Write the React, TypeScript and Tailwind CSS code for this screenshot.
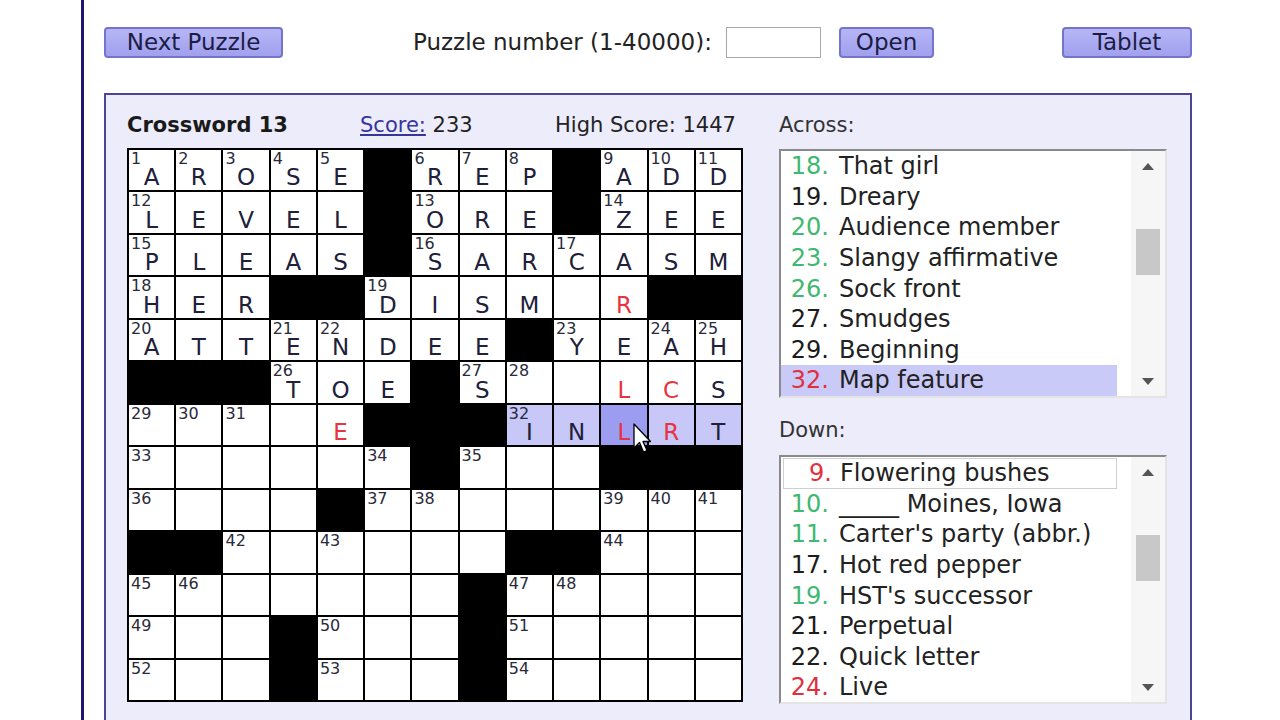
import React from 'react'

const GRID = [
	'AROSE#REP#ADD',
	'LEVEL#ORE#ZEE',
	'PLEAS#SARCASM',
	'HER##DISM.R##',
	'ATTENDEE#YEAH',
	'###TOE#S..LCS',
	'....E###INLRT',
	'......#...###',
	'....#........',
	'##......##...',
	'.......#.....',
	'...#...#.....',
	'...#...#.....',
]

const RED = new Set(['3,10', '5,10', '5,11', '6,4', '6,10', '6,11'])

function isOpen(r: number, c: number) {
	return r >= 0 && r < 13 && c >= 0 && c < 13 && GRID[r][c] !== '#'
}

function buildNumbers() {
	const nums: Record<string, number> = {}
	let n = 1
	for (let r = 0; r < 13; r++) {
		for (let c = 0; c < 13; c++) {
			if (!isOpen(r, c)) continue
			const across = !isOpen(r, c - 1) && isOpen(r, c + 1)
			const down = !isOpen(r - 1, c) && isOpen(r + 1, c)
			if (across || down) nums[`${r},${c}`] = n++
		}
	}
	return nums
}

const NUMS = buildNumbers()

type Clue = { n: number; text: string; tone: 'green' | 'black' | 'red' }

const ACROSS: Clue[] = [
	{ n: 18, text: 'That girl', tone: 'green' },
	{ n: 19, text: 'Dreary', tone: 'black' },
	{ n: 20, text: 'Audience member', tone: 'green' },
	{ n: 23, text: 'Slangy affirmative', tone: 'green' },
	{ n: 26, text: 'Sock front', tone: 'green' },
	{ n: 27, text: 'Smudges', tone: 'black' },
	{ n: 29, text: 'Beginning', tone: 'black' },
	{ n: 32, text: 'Map feature', tone: 'red' },
]

const DOWN: Clue[] = [
	{ n: 9, text: 'Flowering bushes', tone: 'red' },
	{ n: 10, text: '_____ Moines, Iowa', tone: 'green' },
	{ n: 11, text: "Carter's party (abbr.)", tone: 'green' },
	{ n: 17, text: 'Hot red pepper', tone: 'black' },
	{ n: 19, text: "HST's successor", tone: 'green' },
	{ n: 21, text: 'Perpetual', tone: 'black' },
	{ n: 22, text: 'Quick letter', tone: 'black' },
	{ n: 24, text: 'Live', tone: 'red' },
]

const toneClass = {
	green: 'text-[#3fb872]',
	black: 'text-[#1c1c1c]',
	red: 'text-[#e0303c]',
}

function Btn({ label, w }: { label: string; w: string }) {
	return (
		<button
			type="button"
			className={`${w} h-[31px] rounded-[4px] border-2 border-[#7474cc] bg-gradient-to-b from-[#b6b6f6] to-[#a0a0ee] text-[23px] leading-none text-[#1c1c44]`}
		>
			{label}
		</button>
	)
}

function Cell({ r, c }: { r: number; c: number }) {
	const ch = GRID[r][c]
	if (ch === '#') return <div className="bg-black" />
	const num = NUMS[`${r},${c}`]
	const current = r === 6 && c === 10
	const word = r === 6 && c >= 8
	const bg = current ? 'bg-[#9c9cf0]' : word ? 'bg-[#c7c7f8]' : 'bg-white'
	const color = RED.has(`${r},${c}`) ? 'text-[#e8343e]' : 'text-[#20203a]'
	return (
		<div className={`relative flex items-end justify-center ${bg}`}>
			{num && (
				<span className="absolute left-[2px] top-[1px] text-[16px] leading-none text-[#2a2a3a]">{num}</span>
			)}
			{ch !== '.' && <span className={`text-[23px] leading-[26px] ${color}`}>{ch}</span>}
		</div>
	)
}

function ClueBox({ items, selected }: { items: Clue[]; selected: 'fill' | 'box' }) {
	return (
		<div className="flex h-[249px] w-[388px] border-2 border-t-[#8a8a8a] border-l-[#8a8a8a] border-r-[#e4e4e4] border-b-[#e4e4e4] bg-white">
			<div className="w-[336px]">
				{items.map((it, i) => {
					const last = i === items.length - 1
					const fill = selected === 'fill' && last
					const box = selected === 'box' && i === 0
					return (
						<div
							key={it.n}
							className={`flex h-[30.6px] items-center text-[24px] leading-none ${fill ? 'bg-[#cacaf8]' : ''} ${
								box ? 'ml-[2px] mt-[1px] h-[29px] border border-[#cfcfcf]' : ''
							}`}
						>
							<span className={`w-[48px] text-right ${toneClass[it.tone]}`}>{it.n}.</span>
							<span className={`${box ? 'ml-[8px]' : 'ml-[10px]'} text-[#222]`}>{it.text}</span>
						</div>
					)
				})}
			</div>
			<div className="ml-auto flex w-[34px] flex-col items-center bg-[#f6f6f6]">
				<div className="flex h-[30px] items-center justify-center">
					<svg width="12" height="7" viewBox="0 0 12 7">
						<path d="M6 0 L12 7 L0 7 Z" fill="#555" />
					</svg>
				</div>
				<div className="mt-[48px] h-[46px] w-[24px] bg-[#c8c8c8]" />
				<div className="mt-auto flex h-[30px] items-center justify-center">
					<svg width="12" height="7" viewBox="0 0 12 7">
						<path d="M0 0 L12 0 L6 7 Z" fill="#555" />
					</svg>
				</div>
			</div>
		</div>
	)
}

export default function App() {
	return (
		<div className="flex h-[720px] w-[1280px] overflow-hidden bg-white font-['DejaVu_Sans',sans-serif] text-[#222]">
			<div className="w-[81px] shrink-0" />
			<div className="w-[3px] shrink-0 bg-[#1e1672]" />
			<div className="flex w-[1108px] flex-col pl-[20px]">
				{/* top controls */}
				<div className="mt-[27px] flex h-[31px] items-center">
					<Btn label="Next Puzzle" w="w-[179px]" />
					<span className="ml-[130px] w-[313px] text-[23px] leading-none">Puzzle number (1-40000):</span>
					<input className="h-[31px] w-[95px] border border-[#a8a8a8] bg-white" />
					<div className="ml-[18px]">
						<Btn label="Open" w="w-[95px]" />
					</div>
					<div className="ml-auto">
						<Btn label="Tablet" w="w-[130px]" />
					</div>
				</div>

				{/* main panel */}
				<div className="mt-[35px] flex h-[660px] w-[1088px] shrink-0 border-2 border-[#4c4598] bg-[#ececfb] pl-[21px] pt-[18px]">
					<div className="flex flex-col">
						<div className="flex h-[24px] items-center text-[21px] leading-none">
							<span className="w-[233px] font-bold text-[#1a1a1a]">Crossword 13</span>
							<span className="w-[195px]">
								<span className="text-[#3535a0] underline">Score:</span> 233
							</span>
							<span>High Score: 1447</span>
						</div>
						<div className="relative mt-[11px]">
							<div className="grid h-[554px] w-[616px] grid-cols-13 grid-rows-13 gap-[2px] border-2 border-black bg-black">
								{GRID.map((row, r) => row.split('').map((_, c) => <Cell key={`${r}-${c}`} r={r} c={c} />))}
							</div>
							<svg
								className="absolute left-[506px] top-[275px]"
								width="20"
								height="32"
								viewBox="0 0 20 32"
							>
								<path d="M1 1 L1 25 L6.5 19.5 L10.5 29 L14 27.5 L10 18.5 L17.5 18.5 Z" fill="#fff" stroke="#000" strokeWidth="1.3" strokeLinejoin="round" />
							</svg>
						</div>
					</div>

					<div className="ml-[36px] flex flex-col text-[21px] leading-none">
						<div className="flex h-[24px] items-center text-[#333]">Across:</div>
						<div className="mt-[12px]">
							<ClueBox items={ACROSS} selected="fill" />
						</div>
						<div className="mt-[20px] flex h-[24px] items-center text-[#333]">Down:</div>
						<div className="mt-[13px]">
							<ClueBox items={DOWN} selected="box" />
						</div>
					</div>
				</div>
			</div>
		</div>
	)
}
